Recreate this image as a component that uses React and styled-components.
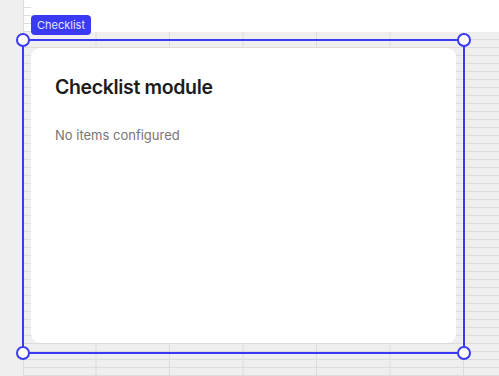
import React from 'react';
import styled, { createGlobalStyle } from 'styled-components';

const GlobalStyle = createGlobalStyle`
  html, body {
    margin: 0;
    padding: 0;
    background: #ffffff;
  }
  body {
    font-family: 'Inter', 'Liberation Sans', sans-serif;
  }
`;

const BLUE = '#3a3af5';
const LINE = '#dcdcdc';

const rowLines = `repeating-linear-gradient(
  to bottom,
  transparent 0px,
  transparent 7px,
  ${LINE} 7px,
  ${LINE} 8px
)`;

const colLines = `linear-gradient(
  to right,
  transparent 0px,
  transparent 72.5px,
  ${LINE} 72.5px,
  ${LINE} 73.5px
)`;

const Page = styled.div`
  display: flex;
  width: 499px;
  height: 376px;
  overflow: hidden;
`;

const Gutter = styled.div`
  width: 23px;
  flex: none;
  background: #efefef;
  border-right: 1px solid ${LINE};
`;

const Canvas = styled.div`
  flex: 1;
  display: flex;
  flex-direction: column;
  min-width: 0;
`;

const TopStrip = styled.div`
  height: 32px;
  flex: none;
  display: flex;
`;

const StripCells = styled.div`
  width: 7px;
  background: ${rowLines};
`;

const StripBlank = styled.div`
  flex: 1;
  background: #ffffff;
`;

const Sheet = styled.div`
  flex: 1;
  background-color: #efefef;
  background-image: ${rowLines}, ${colLines};
  background-size: 100% 8px, 73.5px 100%;
  background-position: 0 0, -1px 0;
  padding-top: 7px;
`;

const Frame = styled.div`
  position: relative;
  box-sizing: border-box;
  width: 443px;
  height: 315px;
  margin-left: -2px;
  border: 2px solid ${BLUE};
  padding: 7px 7px 9px 7px;
  display: flex;
`;

const Tag = styled.div`
  position: absolute;
  left: 7px;
  top: -26px;
  height: 20px;
  padding: 0 6px;
  display: flex;
  align-items: center;
  background: ${BLUE};
  color: #e4e4ff;
  border-radius: 4px;
  font-size: 11px;
  line-height: 1;
  white-space: nowrap;
`;

const Handle = styled.span`
  position: absolute;
  box-sizing: border-box;
  width: 14px;
  height: 14px;
  border-radius: 50%;
  border: 2px solid ${BLUE};
  background: #ffffff;
  ${({ $v }) => $v}: -8px;
  ${({ $h }) => $h}: -8px;
`;

const Card = styled.div`
  flex: 1;
  background: #ffffff;
  border-radius: 9px;
  padding: 27px 24px;
`;

const Title = styled.h2`
  margin: 0;
  font-size: 19.5px;
  font-weight: 600;
  letter-spacing: -0.35px;
  color: #1c1c1c;
  line-height: 24px;
`;

const Empty = styled.p`
  margin: 27px 0 0;
  font-size: 13px;
  color: #767676;
  line-height: 18px;
`;

export default function App() {
  return (
    <>
      <GlobalStyle />
      <Page>
        <Gutter />
        <Canvas>
          <TopStrip>
            <StripCells />
            <StripBlank />
          </TopStrip>
          <Sheet>
            <Frame>
              <Tag>Checklist</Tag>
              <Handle $v="top" $h="left" />
              <Handle $v="top" $h="right" />
              <Handle $v="bottom" $h="left" />
              <Handle $v="bottom" $h="right" />
              <Card>
                <Title>Checklist module</Title>
                <Empty>No items configured</Empty>
              </Card>
            </Frame>
          </Sheet>
        </Canvas>
      </Page>
    </>
  );
}
